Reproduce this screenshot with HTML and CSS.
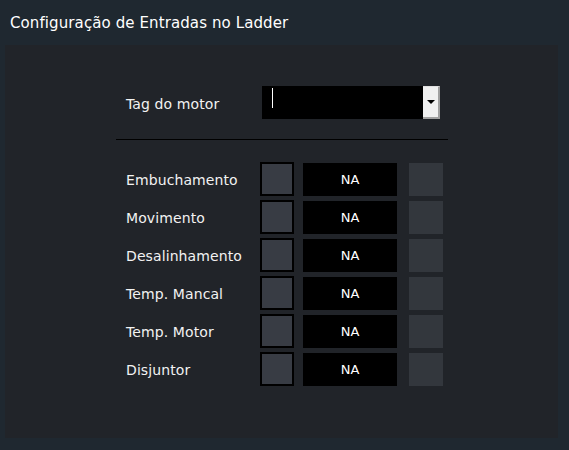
FILE: index.html
```html
<!DOCTYPE html>
<html>
<head>
<meta charset="utf-8">
<link rel="stylesheet" href="styles.css">
</head>
<body>
<div class="header">Configuração de Entradas no Ladder</div>
<div class="panel">
  <div class="form">
    <div class="tag-row">
      <span class="label">Tag do motor</span>
      <div class="combo">
        <div class="combo-field"><span class="caret"></span></div>
        <div class="combo-btn"><span class="arrow"></span></div>
      </div>
    </div>
    <div class="sep"></div>
    <div class="grid">
      <span class="label">Embuchamento</span><div class="check"></div><div class="na">NA</div><div class="sq"></div>
      <span class="label">Movimento</span><div class="check"></div><div class="na">NA</div><div class="sq"></div>
      <span class="label">Desalinhamento</span><div class="check"></div><div class="na">NA</div><div class="sq"></div>
      <span class="label">Temp. Mancal</span><div class="check"></div><div class="na">NA</div><div class="sq"></div>
      <span class="label">Temp. Motor</span><div class="check"></div><div class="na">NA</div><div class="sq"></div>
      <span class="label">Disjuntor</span><div class="check"></div><div class="na">NA</div><div class="sq"></div>
    </div>
  </div>
</div>
</body>
</html>
```
FILE: styles.css
```css
html, body {
  margin: 0;
  padding: 0;
}
body {
  background: #1f2830;
  width: 569px;
  height: 450px;
  overflow: hidden;
  font-family: "DejaVu Sans", sans-serif;
  color: #ffffff;
}
.header {
  height: 45px;
  box-sizing: border-box;
  padding: 14px 0 0 10px;
  font-size: 15px;
  line-height: 18px;
  letter-spacing: 0.1px;
}
.panel {
  margin: 0 11px 0 5px;
  height: 393px;
  background: #212429;
  box-sizing: border-box;
  padding: 41px 0 0 111px;
}
.form {
  width: 332px;
}
.tag-row {
  display: flex;
  align-items: center;
  height: 33px;
  padding-left: 10px;
}
.label {
  font-size: 14px;
  color: #f2f2f2;
  letter-spacing: 0.1px;
}
.tag-row .label {
  width: 136px;
  padding-top: 2px;
}
.combo {
  display: flex;
  height: 33px;
}
.combo-field {
  width: 161px;
  background: #000;
  position: relative;
}
.caret {
  position: absolute;
  left: 10px;
  top: 2px;
  width: 1px;
  height: 20px;
  background: #fff;
}
.combo-btn {
  width: 15px;
  background: #f0f0f0;
  border-right: 2px solid #a0a0a0;
  border-bottom: 2px solid #a0a0a0;
  border-top: 1px solid #e0e0e0;
  display: flex;
  justify-content: center;
  align-items: center;
}
.arrow {
  width: 0;
  height: 0;
  border-left: 4px solid transparent;
  border-right: 4px solid transparent;
  border-top: 4px solid #000;
}
.sep {
  height: 1px;
  background: #000;
  margin-top: 20px;
}
.grid {
  margin-top: 22px;
  padding-left: 10px;
  display: grid;
  grid-template-columns: 134px 34px 103px 46px;
  grid-auto-rows: 34px;
  row-gap: 4px;
  align-items: center;
}
.grid .label {
  line-height: 32px;
  padding-top: 2px;
}
.check {
  width: 34px;
  height: 34px;
  box-sizing: border-box;
  border: 2px solid #000;
  background: #383c44;
}
.na {
  width: 94px;
  height: 33px;
  margin-left: 9px;
  background: #000;
  display: flex;
  align-items: center;
  justify-content: center;
  font-size: 13px;
}
.sq {
  width: 34px;
  height: 33px;
  margin-left: 12px;
  background: #33373d;
}
```
